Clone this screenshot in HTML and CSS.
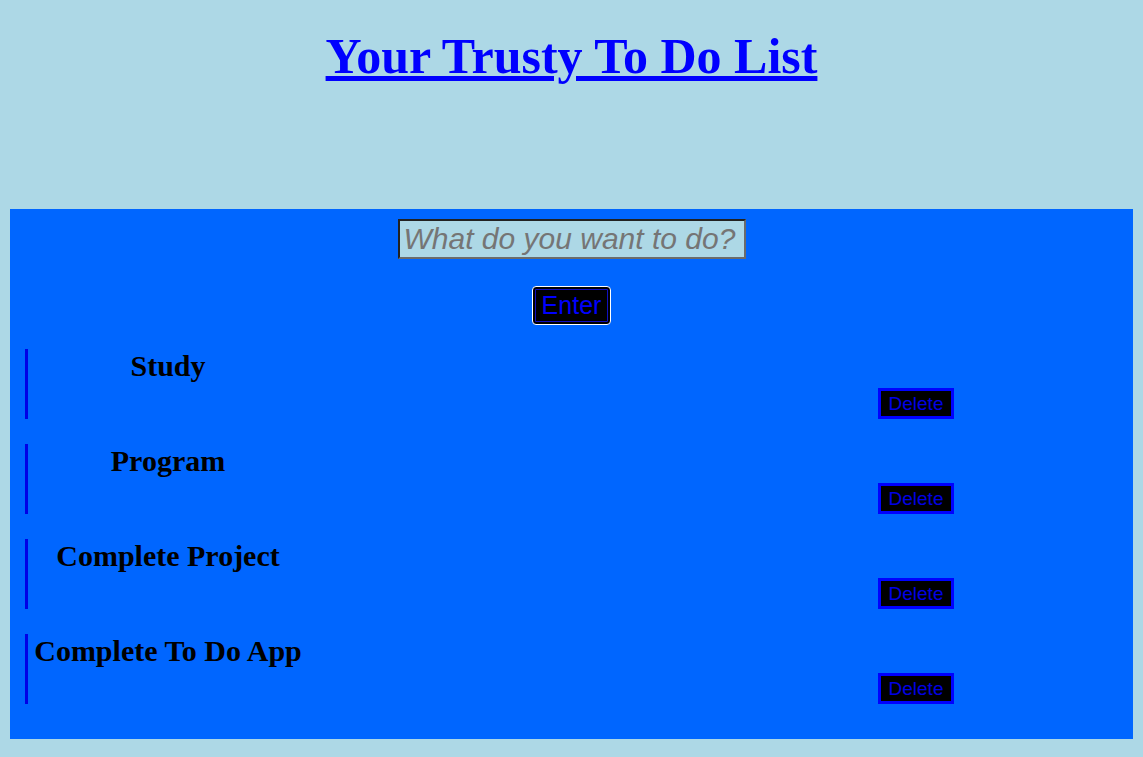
FILE: index.html
```html
<!DOCTYPE html>
<html lang="en">
<head>
<meta charset="utf-8">
<title>Your Trusty To Do List</title>
<link rel="stylesheet" href="styles.css">
</head>
<body>
<h1 class="title"><a class="title-link" href="#">Your Trusty To Do List</a></h1>
<main class="panel">
  <form class="entry">
    <input class="task-input" type="text" placeholder="What do you want to do?">
    <button class="enter-btn" type="button">Enter</button>
  </form>
  <ul class="list">
    <li class="item"><h2 class="item-text">Study</h2><button class="delete-btn" type="button">Delete</button></li>
    <li class="item"><h2 class="item-text">Program</h2><button class="delete-btn" type="button">Delete</button></li>
    <li class="item"><h2 class="item-text">Complete Project</h2><button class="delete-btn" type="button">Delete</button></li>
    <li class="item"><h2 class="item-text">Complete To Do App</h2><button class="delete-btn" type="button">Delete</button></li>
  </ul>
</main>
</body>
</html>
```

FILE: styles.css
```css
html {
  background: #add8e6;
}
body {
  margin: 0;
  padding: 0 10px 18px;
  background: #add8e6;
  font-family: "Liberation Serif", "Times New Roman", serif;
}
.title {
  margin: 28px 0 0;
  text-align: center;
  font-size: 50px;
  line-height: 56px;
  font-weight: bold;
}
.title-link {
  color: #0000ff;
  text-decoration: underline;
}
.panel {
  margin-top: 125px;
  background: #0066ff;
  padding: 10px 0 35px;
}
.entry {
  margin: 0;
  display: flex;
  flex-direction: column;
  align-items: center;
  gap: 27px;
}
.task-input {
  box-sizing: border-box;
  width: 348px;
  height: 40px;
  margin: 0;
  padding: 1px 4px;
  background: #add8e6;
  border: 2px solid;
  border-color: #222 #6b6b6b #6b6b6b #222;
  font-family: "Liberation Sans", Arial, sans-serif;
  font-size: 30px;
  font-style: italic;
  color: #000;
}
.task-input::placeholder {
  color: #757575;
  font-style: italic;
}
.enter-btn {
  box-sizing: border-box;
  width: 79px;
  height: 39px;
  padding: 0;
  background: #000;
  color: #0000ff;
  border: 1px solid #fff;
  border-radius: 4px;
  box-shadow: inset 0 0 0 2px #000, inset 0 0 0 3px #1010c0;
  font-family: "Liberation Sans", Arial, sans-serif;
  font-size: 25px;
  line-height: 1;
}
.list {
  list-style: none;
  margin: 24px 0 0;
  padding: 0;
  display: flex;
  flex-direction: column;
  gap: 25px;
}
.item {
  display: flex;
  align-items: flex-end;
  height: 70px;
  margin-left: 15px;
  border-left: 3px solid #0000e6;
}
.item-text {
  align-self: flex-start;
  width: 280px;
  margin: 0;
  text-align: center;
  font-size: 30px;
  font-weight: bold;
  line-height: 34px;
  color: #000;
  white-space: nowrap;
}
.delete-btn {
  box-sizing: border-box;
  width: 76px;
  height: 31px;
  margin-left: 570px;
  padding: 0;
  background: #000;
  color: #0000e6;
  border: 3px solid #0000ff;
  border-radius: 0;
  font-family: "Liberation Sans", Arial, sans-serif;
  font-size: 19px;
  line-height: 1;
}
```
